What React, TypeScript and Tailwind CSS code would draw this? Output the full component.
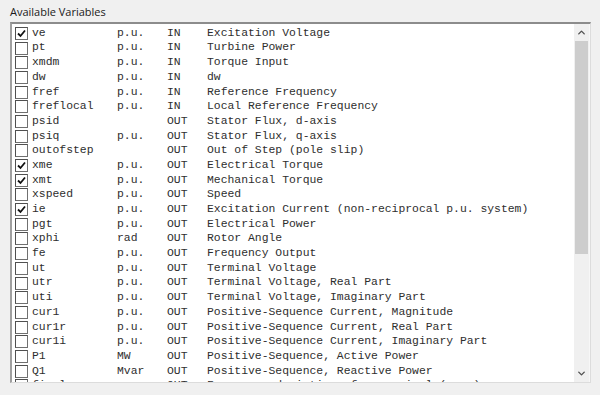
import { ChevronUp, ChevronDown } from "lucide-react"

const rows: [boolean, string, string, string, string][] = [
  [true, "ve", "p.u.", "IN", "Excitation Voltage"],
  [false, "pt", "p.u.", "IN", "Turbine Power"],
  [false, "xmdm", "p.u.", "IN", "Torque Input"],
  [false, "dw", "p.u.", "IN", "dw"],
  [false, "fref", "p.u.", "IN", "Reference Frequency"],
  [false, "freflocal", "p.u.", "IN", "Local Reference Frequency"],
  [false, "psid", "", "OUT", "Stator Flux, d-axis"],
  [false, "psiq", "p.u.", "OUT", "Stator Flux, q-axis"],
  [false, "outofstep", "", "OUT", "Out of Step (pole slip)"],
  [true, "xme", "p.u.", "OUT", "Electrical Torque"],
  [true, "xmt", "p.u.", "OUT", "Mechanical Torque"],
  [false, "xspeed", "p.u.", "OUT", "Speed"],
  [true, "ie", "p.u.", "OUT", "Excitation Current (non-reciprocal p.u. system)"],
  [false, "pgt", "p.u.", "OUT", "Electrical Power"],
  [false, "xphi", "rad", "OUT", "Rotor Angle"],
  [false, "fe", "p.u.", "OUT", "Frequency Output"],
  [false, "ut", "p.u.", "OUT", "Terminal Voltage"],
  [false, "utr", "p.u.", "OUT", "Terminal Voltage, Real Part"],
  [false, "uti", "p.u.", "OUT", "Terminal Voltage, Imaginary Part"],
  [false, "cur1", "p.u.", "OUT", "Positive-Sequence Current, Magnitude"],
  [false, "cur1r", "p.u.", "OUT", "Positive-Sequence Current, Real Part"],
  [false, "cur1i", "p.u.", "OUT", "Positive-Sequence Current, Imaginary Part"],
  [false, "P1", "MW", "OUT", "Positive-Sequence, Active Power"],
  [false, "Q1", "Mvar", "OUT", "Positive-Sequence, Reactive Power"],
  [false, "firel", "p.u.", "OUT", "Frequency deviation, from nominal (p.u.)"],
]

function Check({ on }: { on: boolean }) {
  return (
    <div className="w-[13px] h-[13px] shrink-0 bg-white border border-[#707070] border-t-[#505050] border-l-[#505050] flex items-center justify-center">
      {on && (
        <svg width="9" height="9" viewBox="0 0 9 9">
          <path d="M1 4.5 L3.5 7 L8 1.5" stroke="#111" strokeWidth="1.8" fill="none" />
        </svg>
      )}
    </div>
  )
}

export default function App() {
  return (
    <div className="w-[600px] h-[395px] bg-[#f0f0f0] overflow-hidden pt-[5px] pl-[10px]">
      <div className="text-[11px] leading-[14px] text-[#1a1a1a] font-['Open_Sans',sans-serif] mb-[3px]">
        Available Variables
      </div>
      <div className="w-[581px] h-[361px] flex border-t-2 border-l-2 border-t-[#8c8c8c] border-l-[#a0a0a0] border-r border-b border-r-[#dcdcdc] border-b-[#dcdcdc] bg-white">
        <div className="flex-1 overflow-hidden pt-[2px] pl-[3px]">
          {rows.map(([on, name, unit, dir, desc]) => (
            <div
              key={name}
              className="flex items-center h-[14.7px] font-['Liberation_Mono',monospace] text-[11.4px] text-[#2e2e2e] whitespace-nowrap"
            >
              <Check on={on} />
              <span className="w-[85px] ml-[4px]">{name}</span>
              <span className="w-[50px]">{unit}</span>
              <span className="w-[40px]">{dir}</span>
              <span>{desc}</span>
            </div>
          ))}
        </div>
        <div className="w-[15px] bg-[#f0f0f0] flex flex-col items-center">
          <div className="h-[17px] flex items-center justify-center">
            <ChevronUp size={11} strokeWidth={3} color="#505050" />
          </div>
          <div className="w-[13px] h-[213px] bg-[#cdcdcd]" />
          <div className="flex-1" />
          <div className="h-[17px] flex items-center justify-center">
            <ChevronDown size={11} strokeWidth={3} color="#505050" />
          </div>
        </div>
        <div className="w-[1px] bg-[#f7f7f7]" />
      </div>
    </div>
  )
}
